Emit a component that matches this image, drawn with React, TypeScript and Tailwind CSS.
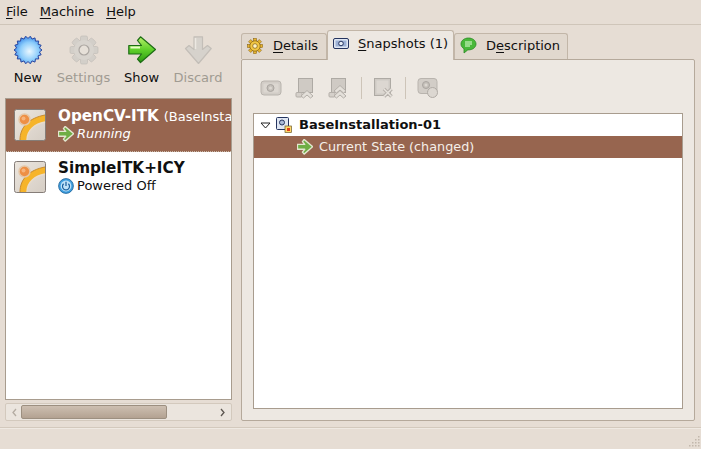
import type { ReactNode } from "react";

function NewIcon() {
  const points = Array.from({ length: 36 }, (_, i) => {
    const r = i % 2 === 0 ? 14 : 11.6;
    const a = (i * Math.PI) / 18;
    return `${14 + r * Math.cos(a)},${14 + r * Math.sin(a)}`;
  }).join(" ");
  return (
    <svg width="28" height="28" viewBox="0 0 28 28">
      <defs>
        <radialGradient id="newFill" cx="0.55" cy="0.55" r="0.55">
          <stop offset="0" stopColor="#eaf7ff" />
          <stop offset="0.6" stopColor="#8dcdfb" />
          <stop offset="1" stopColor="#3d8cea" />
        </radialGradient>
      </defs>
      <polygon points={points} fill="url(#newFill)" stroke="#2c47a0" strokeWidth="1" />
    </svg>
  );
}

function GearIcon() {
  const teeth = Array.from({ length: 8 }, (_, i) => i * 45);
  return (
    <svg width="30" height="30" viewBox="0 0 30 30">
      {teeth.map((t) => (
        <rect key={t} x="11.5" y="1" width="7" height="7" rx="1.5" fill="#d3cfc9" stroke="#c2bdb7" strokeWidth="0.7" transform={`rotate(${t} 15 15)`} />
      ))}
      <circle cx="15" cy="15" r="10" fill="#d8d4ce" />
      <circle cx="15" cy="15" r="5" fill="#e6e0d8" stroke="#aaa5a0" strokeWidth="1.200" />
    </svg>
  );
}

const ARROW = "M.8 9.500H13.500L9.500 4.500 12.500.8 27.500 13.500 12.500 26.500 9.500 23 13.500 18H.8z";

function ArrowIcon() {
  return (
    <svg width="28" height="28" viewBox="0 0 28 28">
      <defs>
        <linearGradient id="arrowFill" x1="0" y1="0" x2="0" y2="1">
          <stop offset="0" stopColor="#b8f06a" />
          <stop offset="0.5" stopColor="#5fd02a" />
          <stop offset="1" stopColor="#2b9a12" />
        </linearGradient>
      </defs>
      <path d={ARROW} fill="url(#arrowFill)" stroke="#1d6d14" strokeWidth="1.200" strokeLinejoin="round" />
      <path d="M2.500 11.500H12" stroke="#eaffc8" strokeWidth="2" />
    </svg>
  );
}

function SoftArrowIcon() {
  return (
    <svg width="16" height="16" viewBox="0 0 28 28" className="shrink-0">
      <path d={ARROW} fill="#6fae45" stroke="#e3e6cf" strokeWidth="2.400" strokeLinejoin="round" />
    </svg>
  );
}

function DiscardIcon() {
  return (
    <svg width="28" height="28" viewBox="0 0 28 28">
      <g transform="rotate(90 14 14)">
        <path d={ARROW} fill="#d6d2cc" stroke="#c3beb8" strokeWidth="1.200" strokeLinejoin="round" />
      </g>
      <path d="M11.500 2v11" stroke="#ece8e2" strokeWidth="1.500" />
    </svg>
  );
}

function VmIcon() {
  return (
    <svg width="32" height="32" viewBox="0 0 32 32" className="shrink-0">
      <defs>
        <linearGradient id="vmBg" x1="0" y1="0" x2="1" y2="1">
          <stop offset="0" stopColor="#ece6de" />
          <stop offset="1" stopColor="#d5cdc4" />
        </linearGradient>
      </defs>
      <rect x="0.5" y="0.5" width="31" height="31" rx="2" fill="url(#vmBg)" stroke="#857d78" />
      <path d="M6 31C6 18 15 9 31 6v7C21 15 13 21 13 31z" fill="#f6b42a" />
      <path d="M6 31C6 18 15 9 31 6" fill="none" stroke="#c98a2c" strokeWidth="1" />
      <path d="M13 31C13 21 21 15 31 13" fill="none" stroke="#e9dccb" strokeWidth="1.500" />
      <circle cx="10.500" cy="10.500" r="5.500" fill="#ee8f45" stroke="#e5c7a8" strokeWidth="1.500" />
      <circle cx="9.500" cy="9.500" r="2" fill="#f6b37c" />
    </svg>
  );
}

function PowerIcon() {
  return (
    <svg width="16" height="16" viewBox="0 0 16 16" className="shrink-0">
      <circle cx="8" cy="8" r="7.400" fill="#3f9fe0" stroke="#1c5f96" strokeWidth="0.800" />
      <circle cx="8" cy="8" r="5.400" fill="#bfe2f8" />
      <path d="M5.600 5.800a3.500 3.500 0 1 0 4.800 0" fill="none" stroke="#155c9c" strokeWidth="1.200" />
      <path d="M8 3.800v4.200" stroke="#155c9c" strokeWidth="1.200" />
    </svg>
  );
}

function DetailsGear() {
  const teeth = Array.from({ length: 8 }, (_, i) => i * 45);
  return (
    <svg width="16" height="16" viewBox="0 0 16 16" className="shrink-0">
      {teeth.map((t) => (
        <rect key={t} x="6.400" y="0.400" width="3.200" height="4" fill="#e9b52e" stroke="#7c5a12" strokeWidth="0.500" transform={`rotate(${t} 8 8)`} />
      ))}
      <circle cx="8" cy="8" r="5.200" fill="#f2c744" stroke="#7c5a12" strokeWidth="0.700" />
      <circle cx="8" cy="8" r="2.300" fill="#fff3c4" stroke="#7c5a12" strokeWidth="0.700" />
    </svg>
  );
}

function CameraIcon() {
  return (
    <svg width="16" height="16" viewBox="0 0 16 16" className="shrink-0">
      <rect x="0.500" y="2.500" width="15" height="10" rx="1.500" fill="#dfe6f2" stroke="#25345f" />
      <rect x="2.500" y="4.500" width="11" height="6" fill="#9db1d6" />
      <circle cx="8" cy="7.500" r="2.300" fill="#e6ecf6" stroke="#25345f" />
    </svg>
  );
}

function BubbleIcon() {
  return (
    <svg width="17" height="17" viewBox="0 0 17 17" className="shrink-0">
      <path d="M8.500 1C4.400 1 1 3.500 1 7c0 2 1.200 3.700 3 4.700V16l3.800-3.100h.7c4.100 0 7.500-2.500 7.500-5.900S12.600 1 8.500 1z" fill="#49b83a" stroke="#2a8a24" strokeWidth="0.800" />
      <path d="M5 5h7M5 7h7M5 9h5" stroke="#e4ffd8" strokeWidth="1" />
    </svg>
  );
}

function Chevrons({ count }: { count: number }) {
  return (
    <>
      <rect x="1" y="15.500" width="6" height="4.500" rx="1" fill="#d5d0ca" stroke="#b4afa9" />
      {Array.from({ length: count }, (_, i) => (
        <path key={i} d={`M6 ${19 - i * 5}l6-5.500 6 5.500-2.500 2-3.500-3-3.500 3z`} fill="#e4e0da" stroke="#b4afa9" />
      ))}
    </>
  );
}

function ToolIcon({ kind }: { kind: "take" | "restore" | "restoreAll" | "delete" | "show" }) {
  return (
    <svg width="22" height="22" viewBox="0 0 22 22" className="block shrink-0">
      {kind === "take" && (
        <>
          <rect x="1" y="4" width="20" height="14" rx="3" fill="#d2cdc7" stroke="#b9b4ae" />
          <rect x="3.500" y="6.500" width="15" height="9" rx="1" fill="#dcd7d1" />
          <circle cx="10.500" cy="11" r="3.500" fill="#c4bfb9" stroke="#aaa5a0" />
          <circle cx="10.500" cy="11" r="1.500" fill="#dcd7d1" />
        </>
      )}
      {kind === "restore" && (
        <>
          <rect x="3.500" y="1.500" width="14" height="14" fill="#cfcac4" stroke="#aeaaa4" />
          <Chevrons count={1} />
        </>
      )}
      {kind === "restoreAll" && (
        <>
          <rect x="3.500" y="1.500" width="14" height="14" fill="#cfcac4" stroke="#aeaaa4" />
          <Chevrons count={2} />
        </>
      )}
      {kind === "delete" && (
        <>
          <rect x="1.500" y="1.500" width="16" height="17" fill="#cfcac4" stroke="#aeaaa4" />
          <rect x="3.500" y="3.500" width="12" height="13" fill="#dcd7d1" />
          <path d="M11 12l7.500 7.500m0-7.500L11 19.500" stroke="#b8b3ad" strokeWidth="3.600" />
          <path d="M11 12l7.500 7.500m0-7.500L11 19.500" stroke="#e8e4de" strokeWidth="1.400" />
        </>
      )}
      {kind === "show" && (
        <>
          <rect x="1" y="1.500" width="19" height="15" rx="3" fill="#d2cdc7" stroke="#b9b4ae" />
          <circle cx="9" cy="8" r="3.500" fill="#c4bfb9" stroke="#aaa5a0" />
          <circle cx="9" cy="8" r="1.500" fill="#dcd7d1" />
          <circle cx="15.500" cy="15.500" r="5" fill="#dcd7d1" stroke="#b0aba5" />
        </>
      )}
    </svg>
  );
}

function SnapshotBadge() {
  return (
    <svg width="16" height="16" viewBox="0 0 16 16" className="block">
      <rect x="0.500" y="0.500" width="12" height="12" rx="1" fill="#dfe6f2" stroke="#25345f" />
      <circle cx="6" cy="5.500" r="2.500" fill="#a9bad8" stroke="#25345f" />
      <rect x="9" y="9" width="6.500" height="6.500" fill="#ffd76a" stroke="#6a5a2a" strokeWidth="0.700" />
      <rect x="11" y="11" width="3" height="3" fill="#e0401a" />
    </svg>
  );
}

function U({ children }: { children: ReactNode }) {
  return <span className="underline underline-offset-2 decoration-1">{children}</span>;
}

function ToolButton({ icon, label, off }: { icon: ReactNode; label: string; off?: boolean }) {
  return (
    <div className="flex h-[73px] flex-col items-center pt-[9px]">
      <div className="flex h-[32px] items-center justify-center">{icon}</div>
      <span className={`mt-[4px] leading-[16px] ${off ? "text-[#a09b92]" : "text-[#101010]"}`}>{label}</span>
    </div>
  );
}

export default function App() {
  return (
    <div className="flex h-[449px] w-[701px] flex-col overflow-hidden bg-[#e6ddd4] text-[13px] text-[#101010] [font-family:'DejaVu_Sans',sans-serif]">
      <div className="flex h-[25px] items-center gap-[12px] border-b border-[#cfc5b9] pl-[6px]">
        <span><U>F</U>ile</span>
        <span><U>M</U>achine</span>
        <span><U>H</U>elp</span>
      </div>

      <div className="flex min-h-0 flex-1 gap-[9px] pl-[5px] pr-[6px]">
        <div className="flex w-[227px] flex-col">
          <div className="flex h-[73px]">
            <div className="w-[46px]"><ToolButton icon={<NewIcon />} label="New" /></div>
            <div className="w-[60px] pl-[5px]"><ToolButton icon={<GearIcon />} label="Settings" off /></div>
            <div className="w-[56px] pl-[5px]"><ToolButton icon={<ArrowIcon />} label="Show" /></div>
            <div className="w-[62px]"><ToolButton icon={<DiscardIcon />} label="Discard" off /></div>
          </div>

          <div className="h-[303px] overflow-hidden border border-[#a89c8e] bg-white">
            <div className="flex h-[53px] gap-[12px] border-b border-dotted border-[#c9b8a8] bg-[#97654f] pl-[8px] pt-[10px] text-white">
              <VmIcon />
              <div className="-mt-[3px] min-w-0 whitespace-nowrap">
                <div className="leading-[20px]">
                  <span className="text-[15.2px] font-bold">OpenCV-ITK</span>
                  <span className="ml-[5px]">(BaseInstallation-01)</span>
                </div>
                <div className="-mt-[1px] flex items-center gap-[3px] leading-[16px]">
                  <SoftArrowIcon />
                  <span className="italic">Running</span>
                </div>
              </div>
            </div>
            <div className="flex gap-[12px] pl-[8px] pt-[9px]">
              <VmIcon />
              <div className="-mt-[3px] whitespace-nowrap">
                <div className="text-[15.2px] font-bold leading-[20px]">SimpleITK+ICY</div>
                <div className="flex items-center gap-[3px] leading-[16px]">
                  <PowerIcon />
                  <span>Powered Off</span>
                </div>
              </div>
            </div>
          </div>

          <div className="mt-[3px] flex h-[18px] items-center rounded-[2px] border border-[#d3c9bd] bg-[#ebe5de] px-[4px]">
            <svg width="9" height="9" viewBox="0 0 9 9"><path d="M6 1L3 4.500 6 8" fill="none" stroke="#b4aca2" strokeWidth="1.300" /></svg>
            <div className="ml-[2px] h-[14px] w-[146px] rounded-[2px] border border-[#9c8f80] bg-gradient-to-b from-[#cdbfb1] to-[#b3a292]" />
            <div className="flex-1" />
            <svg width="9" height="9" viewBox="0 0 9 9"><path d="M3 1l3 3.500L3 8" fill="none" stroke="#5c5650" strokeWidth="1.300" /></svg>
          </div>
        </div>

        <div className="flex flex-1 flex-col pt-[5px]">
          <div className="flex h-[29px] items-end">
            <div className="flex h-[26px] w-[86px] items-center gap-[10px] rounded-t-[3px] border border-b-0 border-[#c2b6a8] bg-[#e1d8ce] pb-[2px] pl-[5px]">
              <DetailsGear />
              <span><U>D</U>etails</span>
            </div>
            <div className="z-10 -mb-[1px] flex h-[30px] w-[127px] items-center gap-[9px] rounded-t-[3px] border border-b-0 border-[#c2b6a8] bg-[#ede8e2] pb-[3px] pl-[5px]">
              <CameraIcon />
              <span><U>S</U>napshots (1)</span>
            </div>
            <div className="flex h-[26px] w-[114px] items-center gap-[9px] rounded-t-[3px] border border-b-0 border-[#c2b6a8] bg-[#e1d8ce] pb-[2px] pl-[5px]">
              <BubbleIcon />
              <span>D<U>e</U>scription</span>
            </div>
          </div>

          <div className="flex h-[362px] flex-col rounded-[2px] border border-[#b5a99b] bg-[#ede8e2] px-[11px] pb-[11px]">
            <div className="flex h-[53px] items-center pl-[7px] pt-[3px]">
              <ToolIcon kind="take" />
              <span className="ml-[13px]"><ToolIcon kind="restore" /></span>
              <span className="ml-[11px]"><ToolIcon kind="restoreAll" /></span>
              <div className="ml-[11px] h-[22px] w-px bg-[#cdc4b8]" />
              <span className="ml-[11px]"><ToolIcon kind="delete" /></span>
              <div className="ml-[10px] h-[22px] w-px bg-[#cdc4b8]" />
              <span className="ml-[11px]"><ToolIcon kind="show" /></span>
            </div>
            <div className="flex-1 border border-[#a89c8e] bg-white">
              <div className="flex h-[22px] items-center pl-[6px]">
                <svg width="11" height="11" viewBox="0 0 11 11"><path d="M1 3h9L5.500 8z" fill="#ffffff" stroke="#222222" strokeWidth="1" /></svg>
                <span className="ml-[5px]"><SnapshotBadge /></span>
                <span className="ml-[7px] font-bold">BaseInstallation-01</span>
              </div>
              <div className="flex h-[22px] items-center bg-[#97654f] pl-[43px] text-[12.8px] text-[#f5efe9]">
                <SoftArrowIcon />
                <span className="ml-[6px]">Current State (changed)</span>
              </div>
            </div>
          </div>
        </div>
      </div>

      <div className="mt-[6px] flex h-[22px] justify-end border-t border-[#d3c9bd] shadow-[inset_0_1px_0_#efe9e2]">
        <svg width="14" height="14" viewBox="0 0 14 14" className="mt-[7px]">
          {[[11, 1], [8, 4], [11, 4], [5, 7], [8, 7], [11, 7], [2, 10], [5, 10], [8, 10], [11, 10]].map(([x, y]) => (
            <rect key={`${x}-${y}`} x={x} y={y} width="1.500" height="1.500" fill="#c2b8ac" />
          ))}
        </svg>
      </div>
    </div>
  );
}
